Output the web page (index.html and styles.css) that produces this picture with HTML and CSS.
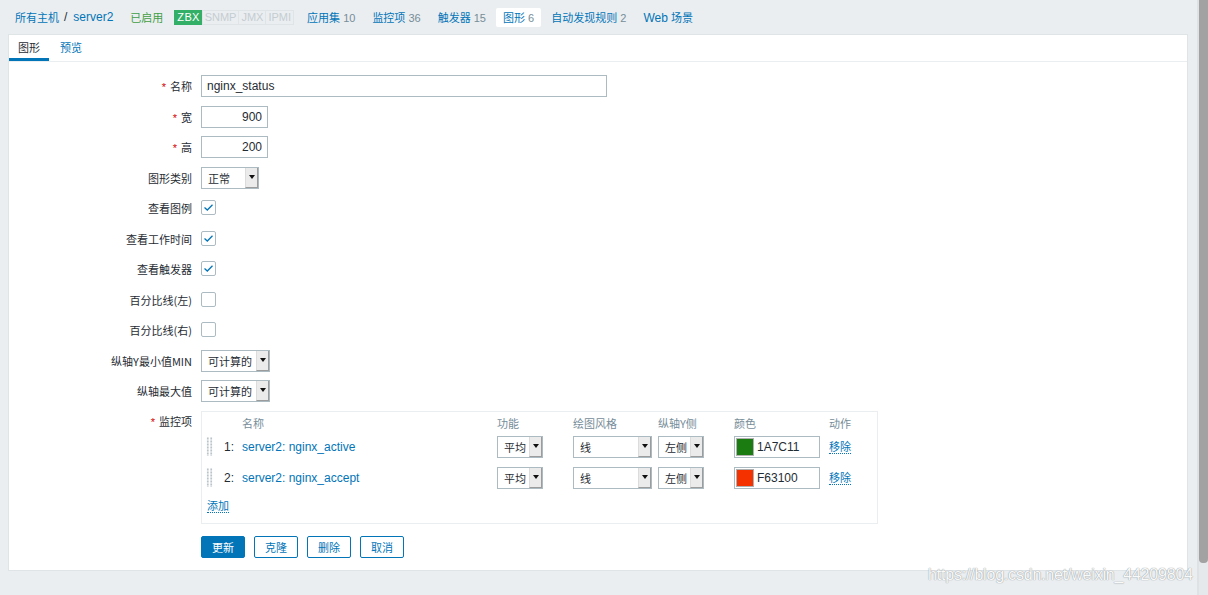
FILE: index.html
```html
<!DOCTYPE html>
<html lang="zh-CN">
<head>
<meta charset="utf-8">
<title>图形</title>
<link rel="stylesheet" href="styles.css">
</head>
<body>
<div class="screen">
  <div class="page">
    <nav class="header">
      <div class="crumbs">
        <a class="cn link">所有主机</a>
        <span class="sep">/</span>
        <a class="link lat">server2</a>
      </div>
      <span class="cn status-on">已启用</span>
      <div class="badges">
        <span class="badge on">ZBX</span><span class="badge">SNMP</span><span class="badge">JMX</span><span class="badge">IPMI</span>
      </div>
      <ul class="host-nav">
        <li><a class="cn link">应用集</a> <span class="cnt">10</span></li>
        <li><a class="cn link">监控项</a> <span class="cnt">36</span></li>
        <li><a class="cn link">触发器</a> <span class="cnt">15</span></li>
        <li class="selected"><a class="cn link">图形</a> <span class="cnt">6</span></li>
        <li><a class="cn link">自动发现规则</a> <span class="cnt">2</span></li>
        <li><a class="link"><span class="lat">Web</span> <span class="cn">场景</span></a></li>
      </ul>
    </nav>

    <main class="panel">
      <div class="tabs">
        <span class="tab active cn">图形</span>
        <span class="tab cn link">预览</span>
      </div>

      <div class="form">
        <div class="row">
          <div class="lbl"><span class="req">*</span><span class="cn">名称</span></div>
          <div class="field"><div class="input w406">nginx_status</div></div>
        </div>
        <div class="row">
          <div class="lbl"><span class="req">*</span><span class="cn">宽</span></div>
          <div class="field"><div class="input num w67">900</div></div>
        </div>
        <div class="row">
          <div class="lbl"><span class="req">*</span><span class="cn">高</span></div>
          <div class="field"><div class="input num w67">200</div></div>
        </div>
        <div class="row">
          <div class="lbl cn">图形类别</div>
          <div class="field"><div class="select w58"><span class="sv cn">正常</span><span class="arrow"></span></div></div>
        </div>
        <div class="row">
          <div class="lbl cn">查看图例</div>
          <div class="field"><span class="check on"><svg viewBox="0 0 15 15" width="15" height="15"><polyline points="3.5,7.5 6.3,10 11.5,4.8" fill="none" stroke="#0275b8" stroke-width="1.3"/></svg></span></div>
        </div>
        <div class="row">
          <div class="lbl cn">查看工作时间</div>
          <div class="field"><span class="check on"><svg viewBox="0 0 15 15" width="15" height="15"><polyline points="3.5,7.5 6.3,10 11.5,4.8" fill="none" stroke="#0275b8" stroke-width="1.3"/></svg></span></div>
        </div>
        <div class="row">
          <div class="lbl cn">查看触发器</div>
          <div class="field"><span class="check on"><svg viewBox="0 0 15 15" width="15" height="15"><polyline points="3.5,7.5 6.3,10 11.5,4.8" fill="none" stroke="#0275b8" stroke-width="1.3"/></svg></span></div>
        </div>
        <div class="row">
          <div class="lbl cn">百分比线(左)</div>
          <div class="field"><span class="check"></span></div>
        </div>
        <div class="row">
          <div class="lbl cn">百分比线(右)</div>
          <div class="field"><span class="check"></span></div>
        </div>
        <div class="row">
          <div class="lbl cn">纵轴Y最小值MIN</div>
          <div class="field"><div class="select w69"><span class="sv cn">可计算的</span><span class="arrow"></span></div></div>
        </div>
        <div class="row">
          <div class="lbl cn">纵轴最大值</div>
          <div class="field"><div class="select w69"><span class="sv cn">可计算的</span><span class="arrow"></span></div></div>
        </div>
        <div class="row top">
          <div class="lbl"><span class="req">*</span><span class="cn">监控项</span></div>
          <div class="field">
            <div class="items">
              <div class="irow ihead cn">
                <span></span><span></span>
                <span>名称</span><span>功能</span><span>绘图风格</span><span>纵轴Y侧</span><span>颜色</span><span>动作</span>
              </div>
              <div class="irow">
                <span class="drag"></span>
                <span class="inum">1:</span>
                <a class="link lat">server2: nginx_active</a>
                <div class="select w46"><span class="sv cn">平均</span><span class="arrow"></span></div>
                <div class="select w79"><span class="sv cn">线</span><span class="arrow"></span></div>
                <div class="select w46"><span class="sv cn">左侧</span><span class="arrow"></span></div>
                <div class="color"><span class="swatch green"></span><span class="ctext">1A7C11</span></div>
                <a class="dlink cn">移除</a>
              </div>
              <div class="irow">
                <span class="drag"></span>
                <span class="inum">2:</span>
                <a class="link lat">server2: nginx_accept</a>
                <div class="select w46"><span class="sv cn">平均</span><span class="arrow"></span></div>
                <div class="select w79"><span class="sv cn">线</span><span class="arrow"></span></div>
                <div class="select w46"><span class="sv cn">左侧</span><span class="arrow"></span></div>
                <div class="color"><span class="swatch red"></span><span class="ctext">F63100</span></div>
                <a class="dlink cn">移除</a>
              </div>
              <div class="add-row"><a class="dlink cn">添加</a></div>
            </div>
          </div>
        </div>
        <div class="row buttons-row">
          <div class="lbl"></div>
          <div class="field buttons">
            <button class="btn primary cn">更新</button>
            <button class="btn cn">克隆</button>
            <button class="btn cn">删除</button>
            <button class="btn cn">取消</button>
          </div>
        </div>
      </div>
    </main>

    <div class="watermark">https://blog.csdn.net/weixin_44209804</div>
  </div>
  <div class="scrollbar"><div class="thumb"></div></div>
</div>
</body>
</html>
```

FILE: styles.css
```css
* { box-sizing: border-box; }
html, body {
  margin: 0;
  padding: 0;
  width: 1208px;
  height: 595px;
  overflow: hidden;
}
body {
  font-family: "Liberation Sans", Arial, "Noto Sans CJK SC", sans-serif;
  font-size: 12px;
  color: #1f2c33;
  background: #ebeef0;
}
.screen {
  display: flex;
  width: 1208px;
  height: 595px;
}
.page {
  position: relative;
  width: 1197px;
  height: 595px;
  flex: none;
}
.cn {
  font-family: "Noto Sans CJK SC", "Liberation Sans", sans-serif;
  font-size: 11px;
}
.lat {
  font-family: "Liberation Sans", Arial, sans-serif;
  font-size: 12px;
}
.link { color: #0275b8; text-decoration: none; }

/* header */
.header {
  height: 34px;
  display: flex;
  align-items: center;
  padding-left: 15px;
}
.crumbs { display: flex; align-items: center; }
.sep { margin: 0 6px 0 5px; color: #1f2c33; font-size: 12px; }
.status-on { color: #429e47; margin-left: 17px; }
.badges { display: flex; margin-left: 11px; height: 15px; }
.badge {
  font-size: 11px;
  line-height: 13px;
  height: 15px;
  padding: 0 2px;
  border: 1px solid #dfe4e7;
  color: #c4cdd2;
  margin-left: -1px;
}
.badge.on {
  background: #34af67;
  border-color: #34af67;
  color: #fff;
  margin-left: 0;
  letter-spacing: 0.3px;
  padding: 0 2px;
}
.host-nav {
  list-style: none;
  margin: 0 0 0 6px;
  padding: 0;
  display: flex;
  gap: 3px;
  font-size: 11px;
}
.host-nav li {
  height: 19px;
  line-height: 19px;
  padding: 0 7px;
  border-radius: 2px;
}
.host-nav li.selected { background: #fff; }
.cnt { color: #768d99; font-size: 11px; }

/* panel */
.panel {
  margin: 0 9px 0 8px;
  width: 1180px;
  height: 537px;
  background: #fff;
  border: 1px solid #dfe4e7;
}
.tabs {
  height: 27px;
  display: flex;
  gap: 2px;
  border-bottom: 1px solid #ebeef0;
}
.tab {
  height: 26px;
  line-height: 24px;
  padding: 0 9px;
}
.tab.active {
  color: #1f2c33;
  box-shadow: inset 0 -3px 0 #0275b8;
}

.form {
  padding-top: 13px;
  display: flex;
  flex-direction: column;
  gap: 8.5px;
}
.row {
  display: grid;
  grid-template-columns: 183px 1fr;
  column-gap: 9px;
  align-items: center;
  min-height: 22px;
}
.row.top { align-items: start; }
.row.top .lbl { line-height: 22px; margin-top: -1px; }
.lbl {
  text-align: right;
  color: #1f2c33;
}
.req {
  color: #d40000;
  font-family: "Liberation Sans", Arial, sans-serif;
  font-size: 11px;
  margin-right: 4px;
}
.field { display: flex; align-items: center; }

.input {
  height: 22px;
  border: 1px solid #acbbc2;
  padding: 0 5px;
  line-height: 20px;
  font-size: 12px;
  background: #fff;
}
.input.num { text-align: right; }
.w406 { width: 406px; }
.w67 { width: 67px; }
.w58 { width: 58px; }
.w69 { width: 69px; }
.w46 { width: 46px; }
.w79 { width: 79px; }

.select {
  display: inline-flex;
  height: 22px;
  border: 1px solid #acbbc2;
  background: #fff;
}
.select .sv {
  flex: 1;
  line-height: 20px;
  padding-left: 6px;
  color: #1f2c33;
  white-space: nowrap;
  overflow: hidden;
}
.select .arrow {
  position: relative;
  width: 13px;
  flex: none;
  background: #ebebeb;
  border-left: 1px solid #dcdcdc;
  border-right: 1px solid #9c9c9c;
  border-bottom: 1px solid #9c9c9c;
}
.select .arrow::after {
  content: "";
  position: absolute;
  left: 3px;
  top: 7px;
  border-left: 3px solid transparent;
  border-right: 3px solid transparent;
  border-top: 4px solid #111;
}

.check {
  display: inline-block;
  width: 15px;
  height: 15px;
  border: 1px solid #acbbc2;
  border-radius: 2px;
  background: #fff;
  position: relative;
  margin-top: -1px;
}
.check svg {
  position: absolute;
  left: -1px;
  top: -1px;
}

/* items table */
.items {
  width: 677px;
  border: 1px solid #ebeef0;
  padding: 4px 0 6px 4px;
}
.irow {
  display: grid;
  grid-template-columns: 12px 24px 255px 76px 85px 76px 95px 1fr;
  align-items: center;
  height: 22px;
}
.irow + .irow { margin-top: 9px; }
.ihead {
  height: 14px;
  color: #768d99;
  line-height: 14px;
}
.ihead + .irow { margin-top: 6px; }
.drag {
  width: 7px;
  height: 19px;
  background-image: radial-gradient(circle, #b9c3c9 1px, transparent 1.2px);
  background-size: 3.5px 3px;
  background-position: 0 0;
}
.inum {
  text-align: right;
  padding-right: 8px;
  font-size: 12px;
}
.color {
  width: 86px;
  height: 22px;
  border: 1px solid #acbbc2;
  display: flex;
  align-items: center;
  padding-left: 1px;
  background: #fff;
}
.swatch {
  width: 18px;
  height: 18px;
  border: 1px solid #b0b0b0;
  flex: none;
}
.swatch.green { background: #1a7c11; }
.swatch.red { background: #f63100; }
.ctext { margin-left: 3px; font-size: 12px; }
.dlink {
  color: #0275b8;
  text-decoration: none;
  border-bottom: 1px dotted #0275b8;
  justify-self: start;
  line-height: 14px;
}
.add-row {
  height: 22px;
  margin-top: 6px;
  display: flex;
  align-items: center;
  padding-left: 1px;
}

/* buttons */
.buttons-row { margin-top: 3.5px; }
.buttons { gap: 9px; }
.btn {
  height: 22px;
  padding: 0 10px;
  border: 1px solid #0275b8;
  border-radius: 2px;
  background: #fff;
  color: #0275b8;
  line-height: 20px;
  cursor: pointer;
}
.btn.primary {
  background: #0275b8;
  color: #fff;
}

/* watermark */
.watermark {
  position: absolute;
  left: 928px;
  top: 566px;
  font-family: "Liberation Sans", Arial, sans-serif;
  font-size: 16px;
  letter-spacing: -0.2px;
  color: rgba(255, 255, 255, 0.95);
  text-shadow: 0 0 1px #9aa0a4, 0 0 1px #9aa0a4;
  white-space: nowrap;
}

/* scrollbar */
.scrollbar {
  width: 11px;
  height: 595px;
  flex: none;
  background: #e6e9ec;
  border-left: 2px solid #dfe2e5;
}
.thumb {
  width: 9px;
  height: 563px;
  background: #a2a2a2;
  border-radius: 0 0 4px 4px;
}
```
